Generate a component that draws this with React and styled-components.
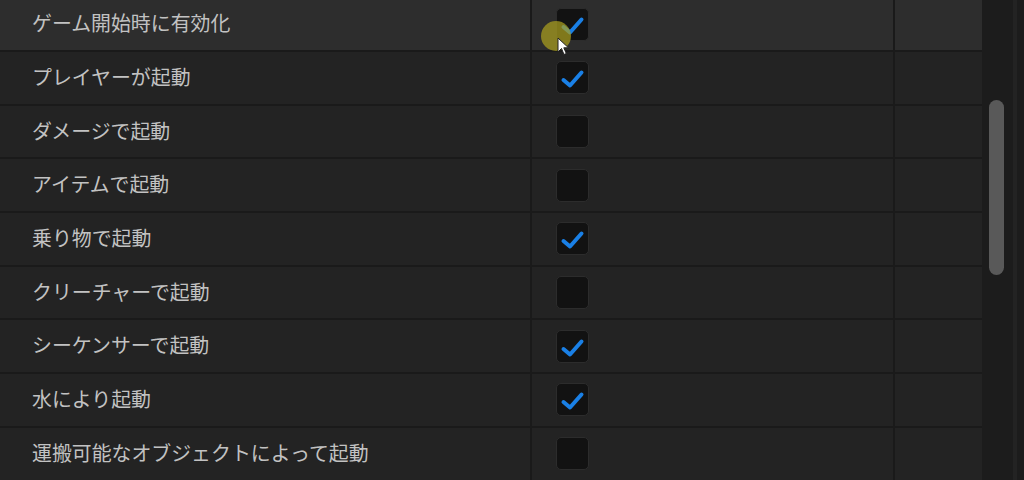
import React from "react";
import styled, { createGlobalStyle } from "styled-components";

const rows = [
  { label: "ゲーム開始時に有効化", checked: true, active: true },
  { label: "プレイヤーが起動", checked: true },
  { label: "ダメージで起動", checked: false },
  { label: "アイテムで起動", checked: false },
  { label: "乗り物で起動", checked: true },
  { label: "クリーチャーで起動", checked: false },
  { label: "シーケンサーで起動", checked: true },
  { label: "水により起動", checked: true },
  { label: "運搬可能なオブジェクトによって起動", checked: false },
];

export default function App() {
  return (
    <>
      <GlobalStyle />
      <Screen>
        <Table>
          <Scroller>
            {rows.map((row) => (
              <Row key={row.label} active={row.active}>
                <Label>{row.label}</Label>
                <CheckCell>
                  <Box>
                    {row.checked && (
                      <svg width="33" height="33" viewBox="0 0 33 33">
                        <path
                          d="M7.5 19 L14 24.5 L25.5 11.5"
                          fill="none"
                          stroke="#1a80e6"
                          strokeWidth="4"
                          strokeLinecap="round"
                          strokeLinejoin="round"
                        />
                      </svg>
                    )}
                  </Box>
                  {row.active && (
                    <Pointer>
                      <Halo />
                      <svg width="14" height="20" viewBox="0 0 14 20">
                        <path
                          d="M1 1 L1 15 L4.5 11.5 L7 17.5 L9.3 16.5 L6.8 10.8 L11.5 10.8 Z"
                          fill="#fff"
                          stroke="#222"
                          strokeWidth="1"
                        />
                      </svg>
                    </Pointer>
                  )}
                </CheckCell>
                <Extra />
              </Row>
            ))}
          </Scroller>
        </Table>
        <Track>
          <Thumb />
          <Edge />
        </Track>
      </Screen>
    </>
  );
}

const GlobalStyle = createGlobalStyle`
  html, body {
    margin: 0;
    padding: 0;
    background: #1c1c1c;
  }
`;

const Screen = styled.div`
  width: 1024px;
  height: 480px;
  display: flex;
  overflow: hidden;
  background: #1c1c1c;
  font-family: "Noto Sans CJK JP", "Noto Sans", sans-serif;
`;

const Table = styled.div`
  width: 982px;
  height: 480px;
  overflow: hidden;
`;

const Scroller = styled.div`
  display: flex;
  flex-direction: column;
  margin-top: -1.7px;
`;

const Row = styled.div`
  display: grid;
  grid-template-columns: 532px 363px 87px;
  height: 51.7px;
  border-bottom: 2px solid #1a1a1a;
  background: ${(p) => (p.active ? "#2d2d2d" : "#232323")};
`;

const Label = styled.div`
  display: flex;
  align-items: center;
  padding: 0 0 3px 32px;
  font-size: 19.9px;
  color: #c2c2c2;
  border-right: 2px solid #1a1a1a;
`;

const CheckCell = styled.div`
  position: relative;
  display: flex;
  align-items: center;
  padding-left: 24px;
  border-right: 2px solid #1a1a1a;
`;

const Box = styled.div`
  width: 33px;
  height: 33px;
  box-sizing: border-box;
  border: 1.5px solid #2c2c2c;
  border-radius: 5px;
  background: #121212;
  display: flex;
  align-items: center;
  justify-content: center;

  svg {
    flex: none;
  }
`;

const Extra = styled.div``;

const Pointer = styled.div`
  position: absolute;
  left: 25px;
  top: 39px;
  width: 14px;
  height: 20px;

  svg {
    position: absolute;
    left: 0;
    top: 0;
  }
`;

const Halo = styled.div`
  position: absolute;
  left: -16px;
  top: -16px;
  width: 30px;
  height: 30px;
  border-radius: 50%;
  background: rgba(170, 160, 30, 0.72);
`;

const Track = styled.div`
  width: 42px;
  height: 480px;
  position: relative;
  display: flex;
  background: #1c1c1c;
`;

const Thumb = styled.div`
  margin: 100px 0 0 7px;
  width: 15px;
  height: 175px;
  border-radius: 8px;
  background: #595959;
`;

const Edge = styled.div`
  margin-left: 9px;
  width: 4px;
  height: 480px;
  background: #232323;
`;
